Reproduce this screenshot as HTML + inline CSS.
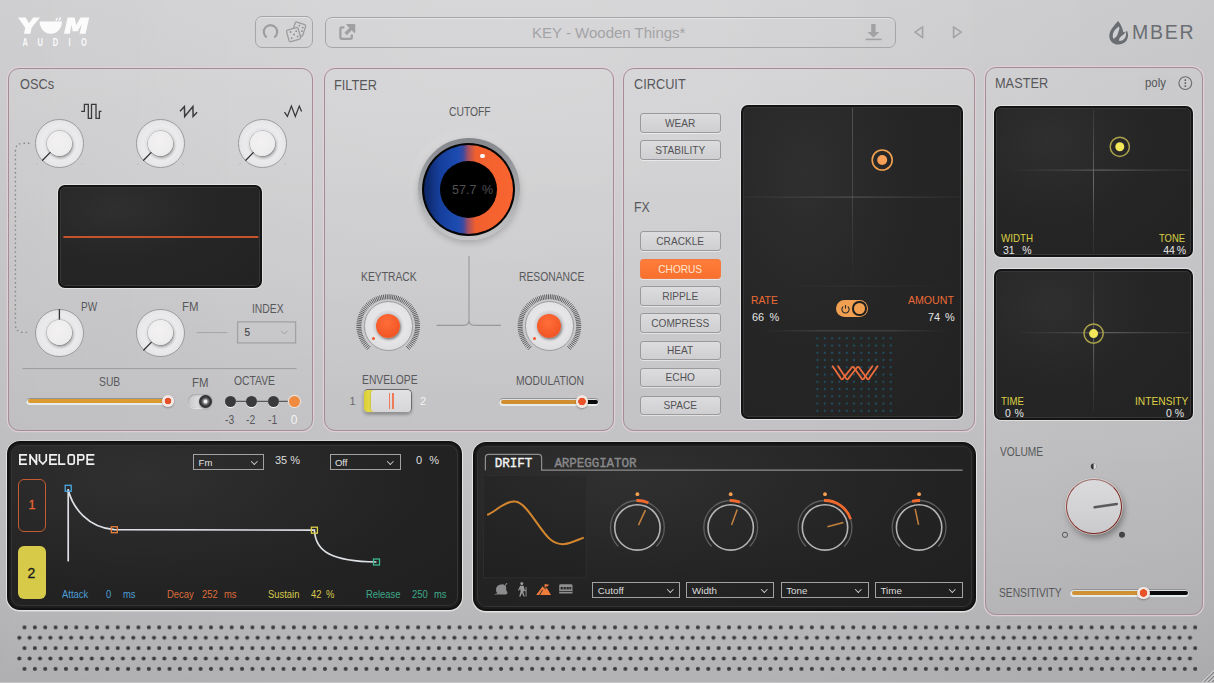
<!DOCTYPE html>
<html><head><meta charset="utf-8">
<style>
*{box-sizing:border-box;margin:0;padding:0}
html,body{width:1214px;height:683px;overflow:hidden}
body{position:relative;font-family:"Liberation Sans",sans-serif;background:radial-gradient(ellipse 620px 380px at 42% 4%,rgba(255,255,255,.12),rgba(255,255,255,0)),linear-gradient(90deg,rgba(0,0,0,.02) 0%,rgba(0,0,0,0) 30%,rgba(0,0,0,0) 60%,rgba(0,0,0,.045) 100%),linear-gradient(180deg,#d2d2d4 0%,#cfcfd1 12%,#c8c8ca 45%,#c3c3c5 64%,#bababc 88%,#b2b2b4 100%)}
.a{position:absolute}
.t{position:absolute;line-height:1;white-space:nowrap}
.panel{position:absolute;border:1px solid #a48e94;border-radius:11px;background:linear-gradient(180deg,rgba(255,255,255,.08),rgba(255,255,255,0));box-shadow:0 0 0 1.2px rgba(226,208,218,.85)}
.lbl{color:#58585b;transform-origin:0 0}
.h{transform:scaleX(.85)}
.s9{transform:scaleX(.86)}
.dark{position:absolute;background:radial-gradient(ellipse at 28% 22%,#2f2f2f 0%,#262626 45%,#222 100%);border:2px solid #141414;border-radius:7px;box-shadow:0 0 0 1px rgba(236,236,236,.65),inset 0 0 0 1px #363636}
.darkp{position:absolute;background:radial-gradient(ellipse at 30% 20%,#303030 0%,#232323 60%,#1f1f1f 100%);border-radius:13px;border:2px solid #121212;box-shadow:0 0.5px 0 1px rgba(240,240,240,.75),inset 0 0 0 2px #1c1c1c,inset 0 0 0 3px #343434}
.knob{position:absolute;border-radius:50%;border:1px solid #9c9c9e;background:radial-gradient(circle at 50% 50%,#d2d2d4 0%,#dcdcde 30%,#ebebed 52%,#e2e2e4 80%,#d8d8da 100%)}
.cap{position:absolute;border-radius:50%;background:radial-gradient(circle at 45% 40%,#f3f1f2 0%,#eeedee 60%,#e4e3e4 100%);box-shadow:1px 2px 3px rgba(0,0,0,.3),0 0 0 0.7px rgba(0,0,0,.18)}
.btn{position:absolute;left:640.3px;width:80.4px;height:19.6px;border:1px solid #9a9a9c;border-radius:3px;background:linear-gradient(180deg,#dcdcde,#cfcfd1);box-shadow:0 1px 0 rgba(255,255,255,.5)}
.btn span{position:absolute;left:0;right:0;top:3.6px;text-align:center;font-size:11px;line-height:1;color:#535355;transform:scaleX(.92)}
.btn.on{background:linear-gradient(180deg,#ff7d3a,#f8702e);border-color:#f27a40}
.btn.on span{color:#fde6d0}
.dd{position:absolute;border:1.2px solid #a2a2a4}
.dd span{position:absolute;left:4.4px;top:3.2px;font-size:9.5px;line-height:1;color:#e6e6e6}
.dd:after{content:"";position:absolute;right:7px;top:4px;width:3.6px;height:3.6px;border-right:1.1px solid #cfcfcf;border-bottom:1.1px solid #cfcfcf;transform:rotate(45deg)}
.dd2 span{font-size:9.8px;left:4.6px;top:3px;color:#dcdcdc}
</style></head><body>

<!-- header -->
<div class="a" style="left:255px;top:16px;width:58px;height:32px;border:1.3px solid #a6a6a8;border-radius:7px;box-shadow:inset 0 1px 0 rgba(255,255,255,.35)"></div>
<div class="a" style="left:325px;top:17px;width:571px;height:31px;border:1.3px solid #a6a6a8;border-radius:7px;box-shadow:inset 0 1px 0 rgba(255,255,255,.35)"></div>
<div class="t" style="left:532px;top:25px;font-size:15px;color:#a3a3a5">KEY - Wooden Things*</div>
<div class="t" style="left:1132px;top:23.2px;font-size:19.5px;color:#6a6e73;letter-spacing:1.75px">MBER</div>
<svg class="a" style="left:0;top:0" width="1214" height="60" viewBox="0 0 1214 60">
 <!-- YUM logo -->
 <g fill="#fbfbfb">
  <path d="M18,17.6 L25.6,17.6 L29,23.2 L33.2,17.6 L40,17.6 L31.6,27.8 L30.4,33.7 L24,33.7 L25.2,27.8 Z"/>
  <path d="M39.6,21.6 L62,21.6 A11.2,12.1 0 0 1 39.6,21.6 Z"/>
  <path d="M55.2,20.8 L57,17.4 L58.2,17.8 L56.8,20.8 Z M58.4,20.8 L60,17.2 L61.2,17.6 L60,20.8 Z"/>
  <path d="M64,33.7 L67.6,17.6 L74.6,17.6 L76.2,25 L80.6,17.6 L89.2,17.6 L85.6,33.7 L79.6,33.7 L81.6,24.6 L77.6,31.2 L72.6,31.2 L71.6,24.6 L69.8,33.7 Z"/>
 </g>
 <g fill="#fafafa" font-family="Liberation Sans" font-size="12" font-weight="bold">
  <text x="0" y="0" transform="translate(22.4,46.3) scale(0.62,0.98)">A</text>
  <text x="0" y="0" transform="translate(37.6,46.3) scale(0.62,0.98)">U</text>
  <text x="0" y="0" transform="translate(52.8,46.3) scale(0.62,0.98)">D</text>
  <text x="0" y="0" transform="translate(68.4,46.3) scale(0.62,0.98)">I</text>
  <text x="0" y="0" transform="translate(81,46.3) scale(0.62,0.98)">O</text>
 </g>
 <!-- refresh arc -->
 <path d="M266.7,37.3 A6.7,6.7 0 1 1 274.3,37.3" fill="none" stroke="#9c9c9e" stroke-width="2.1"/>
 <!-- dice -->
 <g fill="none" stroke="#9c9c9e" stroke-width="1.3" stroke-linejoin="round">
  <rect x="293.5" y="23" width="11" height="12" rx="1.5" transform="rotate(18 299 29)"/>
  <rect x="287.6" y="28.6" width="12" height="12" rx="1.5" transform="rotate(-16 293.6 34.6)" fill="#d4d4d6"/>
 </g>
 <g fill="#8e8e90">
  <circle cx="299.4" cy="25.6" r="0.9"/><circle cx="302.8" cy="27.6" r="0.9"/><circle cx="302" cy="31.2" r="0.9"/>
  <circle cx="290.6" cy="32" r="0.9"/><circle cx="294" cy="34.5" r="0.9"/><circle cx="297.6" cy="36.6" r="0.9"/><circle cx="291.6" cy="38.2" r="0.9"/><circle cx="296.2" cy="31.2" r="0.9"/>
 </g>
 <!-- share icon -->
 <path d="M344.4,27.4 L342,27.4 Q340.4,27.4 340.4,29 L340.4,37.2 Q340.4,38.8 342,38.8 L350.2,38.8 Q351.8,38.8 351.8,37.2 L351.8,34.6" fill="none" stroke="#a0a0a2" stroke-width="2.3"/>
 <path d="M345.6,34 L351.6,28" stroke="#a0a0a2" stroke-width="3.2"/>
 <path d="M347,24.6 L354.6,24.6 L354.6,32.2 Z" fill="#a0a0a2" stroke="#a0a0a2" stroke-width="1.4" stroke-linejoin="round"/>
 <!-- download icon -->
 <path d="M871.2,24 L875.6,24 L875.6,32 L879.4,32 L873.4,37.4 L867.4,32 L871.2,32 Z" fill="#a2a2a4"/>
 <rect x="865.6" y="38.6" width="16" height="1.6" fill="#a2a2a4"/>
 <!-- arrows -->
 <path d="M922.6,26.8 L915,32.2 L922.6,37.6 Z" fill="none" stroke="#a4a4a6" stroke-width="1.6" stroke-linejoin="round"/>
 <path d="M953.6,26.8 L961.2,32.2 L953.6,37.6 Z" fill="none" stroke="#a4a4a6" stroke-width="1.6" stroke-linejoin="round"/>
 <!-- ember flame -->
 <path d="M1118.1,21.1 C1114,26 1109.3,30.5 1109.3,36 C1109.3,41 1113.4,44.6 1118.5,44.6 C1123.8,44.6 1128,40.8 1128,35.6 C1128,33.6 1127.6,32 1126.9,30.7 C1125.8,32.2 1124.4,32.6 1123.2,31.8 C1122.4,27.8 1120.6,24 1118.1,21.1 Z" fill="#6a6e73"/>
 <path d="M1119,26.6 C1114.2,29.4 1111.8,34 1113.2,38.8 C1116.8,37.6 1117.6,34.6 1118.2,32.6 C1118.8,30.6 1120,28.8 1119,26.6 Z" fill="#d0d0d2"/>
 <path d="M1125.8,31.8 C1124.6,34.8 1121.4,35.4 1119.8,37.8 C1119,39 1119,40.2 1119.4,41 C1124,41 1127,36.8 1125.8,31.8 Z" fill="#d0d0d2"/>
</svg>

<!-- panels -->
<div class="panel" style="left:8px;top:68px;width:305px;height:363px"></div>
<div class="panel" style="left:324px;top:68px;width:290px;height:363px"></div>
<div class="panel" style="left:623px;top:68px;width:352px;height:363px"></div>
<div class="panel" style="left:985px;top:67px;width:218px;height:548px"></div>

<div class="t lbl h" style="left:20px;top:76px;font-size:15px">OSCs</div>
<div class="t lbl h" style="left:334px;top:76.6px;font-size:15px">FILTER</div>
<div class="t lbl h" style="left:634.2px;top:76px;font-size:15px">CIRCUIT</div>
<div class="t lbl h" style="left:995.2px;top:75.2px;font-size:15px">MASTER</div>


<!-- dark screens -->
<div class="dark" style="left:58px;top:185px;width:204px;height:103px"></div>
<div class="dark" style="left:741px;top:105px;width:222px;height:314px"></div>
<div class="dark" style="left:994px;top:106px;width:199px;height:151px"></div>
<div class="dark" style="left:994px;top:269px;width:199px;height:151px"></div>

<div class="darkp" style="left:7px;top:441px;width:455px;height:169px"></div>
<div class="darkp" style="left:473px;top:442px;width:503px;height:169px"></div>


<!-- OSCs content -->
<div class="knob" style="left:35px;top:119px;width:48.5px;height:48.5px"></div>
<div class="cap" style="left:47px;top:130.5px;width:25px;height:25px"></div>
<div class="knob" style="left:136px;top:119px;width:48.5px;height:48.5px"></div>
<div class="cap" style="left:148px;top:130.5px;width:25px;height:25px"></div>
<div class="knob" style="left:238.2px;top:119px;width:48.5px;height:48.5px"></div>
<div class="cap" style="left:250.2px;top:130.5px;width:25px;height:25px"></div>
<div class="knob" style="left:35px;top:308.6px;width:48.5px;height:48.5px"></div>
<div class="cap" style="left:47px;top:320.2px;width:25px;height:25px"></div>
<div class="knob" style="left:136.2px;top:308.6px;width:48.5px;height:48.5px"></div>
<div class="cap" style="left:148.2px;top:320.2px;width:25px;height:25px"></div>
<svg class="a" style="left:0;top:0" width="320" height="440" viewBox="0 0 320 440">
 <g stroke="#343436" stroke-width="1.35" stroke-linecap="round">
  <line x1="50" y1="152.6" x2="42.6" y2="160.2"/>
  <line x1="151" y1="152.6" x2="143.6" y2="160.2"/>
  <line x1="253.2" y1="152.6" x2="245.8" y2="160.2"/>
  <line x1="59.4" y1="309.6" x2="59.4" y2="319"/>
  <line x1="151.2" y1="342.4" x2="143.8" y2="350"/>
 </g>
 <g stroke="#bdbdbf" stroke-width="1" >
  <line x1="38" y1="163" x2="36" y2="165"/><line x1="81" y1="163" x2="83" y2="165"/>
  <line x1="139" y1="163" x2="137" y2="165"/><line x1="182" y1="163" x2="184" y2="165"/>
  <line x1="241" y1="163" x2="239" y2="165"/><line x1="284" y1="163" x2="286" y2="165"/>
  <line x1="38" y1="353" x2="36" y2="355"/><line x1="81" y1="353" x2="83" y2="355"/>
  <line x1="139" y1="353" x2="137" y2="355"/><line x1="182" y1="353" x2="184" y2="355"/>
 </g>
 <!-- wave icons -->
 <path d="M81.1,111.4 L84.4,111.4 L84.4,104.3 L88.3,104.3 L88.3,118.4 L91.5,118.4 L91.5,104.3 L96,104.3 L96,118.4 L99.4,118.4 L99.4,111.4 L101.5,111.4" fill="none" stroke="#3a3a3c" stroke-width="1.3" stroke-linejoin="miter"/>
 <path d="M180,111.2 L184.4,106.6 L184.7,116.4 L192.9,106.6 L193.1,116.4 L197.1,112.3" fill="none" stroke="#3a3a3c" stroke-width="1.5" stroke-linejoin="miter"/>
 <path d="M284.5,112.1 L287.4,116.4 L291.4,106.1 L295.3,116.4 L299.3,106.1 L301.6,111.4" fill="none" stroke="#3a3a3c" stroke-width="1.3" stroke-linejoin="miter"/>
 <!-- dotted connector -->
 <path d="M29.5,143.2 L23.4,143.2 Q15.4,143.2 15.4,151.2 L15.4,324.4 Q15.4,332.4 23.4,332.4 L30,332.4" fill="none" stroke="#8a8a8c" stroke-width="1.4" stroke-dasharray="1.6 2.8"/>
 <!-- screen line -->
 <line x1="63.4" y1="237" x2="258.4" y2="237" stroke="#c6532a" stroke-width="2"/>
 <!-- index connector -->
 <line x1="196.6" y1="332.6" x2="227.4" y2="332.6" stroke="#a6a6a8" stroke-width="1"/>
 <rect x="237.6" y="321.9" width="58" height="21" fill="none" stroke="#a2a2a4" stroke-width="1.3"/>
 <path d="M281.2,330.8 L284.4,334 L287.6,330.8" fill="none" stroke="#a0a0a2" stroke-width="1"/>
 <!-- separator -->
 <line x1="22.4" y1="368.6" x2="296.6" y2="368.6" stroke="#9c9c9e" stroke-width="1"/>
 <!-- octave -->
 <line x1="230.5" y1="401.4" x2="294.2" y2="401.4" stroke="#5a5a5c" stroke-width="1.3"/>
</svg>
<div class="t lbl s9" style="left:80.6px;top:301px;font-size:12px;transform:scaleX(.83)">PW</div>
<div class="t lbl s9" style="left:181.7px;top:301px;font-size:12px;transform:scaleX(.95)">FM</div>
<div class="t lbl s9" style="left:251.6px;top:303px;font-size:12px">INDEX</div>
<div class="t" style="left:244.6px;top:327.6px;font-size:10px;color:#48484a;-webkit-text-stroke:0.2px #48484a">5</div>
<div class="t lbl s9" style="left:99px;top:376px;font-size:12px">SUB</div>
<div class="t lbl s9" style="left:192.2px;top:376.6px;font-size:12px;transform:scaleX(.95)">FM</div>
<div class="t lbl s9" style="left:234.4px;top:375px;font-size:12px">OCTAVE</div>
<div class="t lbl s9" style="left:225px;top:414px;font-size:12px">-3</div>
<div class="t lbl s9" style="left:246.4px;top:414px;font-size:12px">-2</div>
<div class="t lbl s9" style="left:267.8px;top:414px;font-size:12px">-1</div>
<div class="t" style="left:290.8px;top:414px;font-size:12px;color:#f4f4f4">0</div>
<!-- sub slider -->
<div class="a" style="left:26px;top:397.6px;width:146px;height:7.6px;border-radius:4px;background:#e6eceb;box-shadow:inset 0 1px 1px #8a8a8a"></div>
<div class="a" style="left:27.6px;top:399.2px;width:140px;height:4px;border-radius:2px;background:#dc9a30"></div>
<div class="a" style="left:161.8px;top:394.8px;width:12.6px;height:12.6px;border-radius:50%;background:radial-gradient(circle,#e4502a 0 38%,#f3e7e4 42% 70%,#cfc8c6 100%);box-shadow:0 1px 2px rgba(0,0,0,.3)"></div>
<!-- fm toggle -->
<div class="a" style="left:188px;top:393.6px;width:24.6px;height:14.6px;border-radius:8px;background:linear-gradient(90deg,#c8c8ca,#dcdcde 40%,#d0d0d2);box-shadow:inset 0 1px 2px rgba(0,0,0,.25),0 1px 0 rgba(255,255,255,.5)"></div>
<div class="a" style="left:199.4px;top:394.6px;width:13px;height:13px;border-radius:50%;background:radial-gradient(circle at 50% 50%,#f2f2f2 0 14%,#8a8a8c 26%,#3a3a3c 48%,#262628 72%,#3c3c3e 100%);box-shadow:0 1px 2px rgba(0,0,0,.3)"></div>
<!-- octave dots -->
<div class="a" style="left:225px;top:395.8px;width:11px;height:11px;border-radius:50%;background:#3a3a3c;box-shadow:0 1.2px 0.5px rgba(245,245,245,.9)"></div>
<div class="a" style="left:246.2px;top:395.8px;width:11px;height:11px;border-radius:50%;background:#3a3a3c;box-shadow:0 1.2px 0.5px rgba(245,245,245,.9)"></div>
<div class="a" style="left:267.7px;top:395.8px;width:11px;height:11px;border-radius:50%;background:#3a3a3c;box-shadow:0 1.2px 0.5px rgba(245,245,245,.9)"></div>
<div class="a" style="left:288.7px;top:395.8px;width:11px;height:11px;border-radius:50%;background:#f08a40;box-shadow:0 0 0 1.2px #e8e0da,0 1px 1px rgba(0,0,0,.3)"></div>


<!-- FILTER content -->
<div class="t lbl s9" style="left:448.8px;top:106px;font-size:12px">CUTOFF</div>
<div class="t lbl s9" style="left:361.2px;top:271px;font-size:12px">KEYTRACK</div>
<div class="t lbl s9" style="left:518.6px;top:271px;font-size:12px">RESONANCE</div>
<div class="t lbl s9" style="left:361.7px;top:374px;font-size:12px">ENVELOPE</div>
<div class="t lbl s9" style="left:516.2px;top:374.5px;font-size:12px">MODULATION</div>
<div class="t" style="left:349.4px;top:396px;font-size:11px;color:#6a6a6c">1</div>
<div class="t" style="left:420px;top:396px;font-size:11px;color:#f2f2f2">2</div>
<!-- cutoff big knob -->
<div class="a" style="left:408px;top:128px;width:122px;height:122px;border-radius:50%;background:radial-gradient(circle at 45% 40%,rgba(255,255,255,.18) 0%,rgba(255,255,255,0) 62%)"></div>
<div class="a" style="left:417.8px;top:138.4px;width:101.8px;height:101.8px;border-radius:50%;background:linear-gradient(180deg,#84878c 0%,#a4a6a9 50%,#c6c6c8 100%);box-shadow:0 3px 6px rgba(0,0,0,.18)"></div>
<div class="a" style="left:422.3px;top:142.9px;width:92.8px;height:92.8px;border-radius:50%;background:#050505"></div>
<div class="a" style="left:424.2px;top:144.8px;width:89px;height:89px;border-radius:50%;background:linear-gradient(90deg,#0c2462 0%,#163f9c 18%,#1c4cb2 38%,#3c4aa0 44%,#a85060 50%,#f0602e 58%,#fa6530 100%)"></div>
<div class="a" style="left:440.3px;top:161.2px;width:56.8px;height:56.8px;border-radius:50%;background:#000"></div>
<div class="a" style="left:480.4px;top:153.7px;width:4.6px;height:4.6px;border-radius:50%;background:#f8f8f8"></div>
<div class="t" style="left:452px;top:183.8px;font-size:12.5px;color:#505052;word-spacing:2.2px">57.7 %</div>
<!-- keytrack/resonance knobs -->
<svg class="a" style="left:0;top:0" width="620" height="440" viewBox="0 0 620 440">
 <path d="M370.27,346.02L366.92,349.73M369.09,344.89L365.52,348.39M367.98,343.69L364.20,346.97M366.94,342.42L362.98,345.47M365.99,341.10L361.84,343.89M365.12,339.71L360.81,342.25M364.33,338.28L359.88,340.56M363.63,336.81L359.05,338.80M363.02,335.29L358.33,337.00M362.51,333.74L357.72,335.16M362.09,332.16L357.22,333.29M361.77,330.56L356.84,331.39M361.55,328.94L356.58,329.47M361.43,327.31L356.43,327.53M361.40,325.67L356.40,325.59M361.48,324.04L356.49,323.66M361.65,322.42L356.70,321.73M361.93,320.81L357.03,319.82M362.30,319.22L357.47,317.93M362.77,317.65L358.02,316.07M363.33,316.12L358.69,314.25M363.98,314.62L359.47,312.48M364.73,313.16L360.35,310.75M365.56,311.76L361.34,309.08M366.48,310.40L362.42,307.48M367.47,309.11L363.61,305.94M368.55,307.88L364.88,304.48M369.69,306.72L366.24,303.10M370.91,305.62L367.68,301.80M372.19,304.61L369.20,300.60M373.53,303.67L370.79,299.49M374.92,302.82L372.45,298.48M376.37,302.05L374.16,297.57M377.85,301.38L375.92,296.77M379.38,300.79L377.73,296.07M380.94,300.30L379.58,295.49M382.52,299.91L381.46,295.02M384.13,299.61L383.37,294.67M385.75,299.41L385.30,294.43M387.38,299.31L387.23,294.31M389.02,299.31L389.17,294.31M390.65,299.41L391.10,294.43M392.27,299.61L393.03,294.67M393.88,299.91L394.94,295.02M395.46,300.30L396.82,295.49M397.02,300.79L398.67,296.07M398.55,301.38L400.48,296.77M400.03,302.05L402.24,297.57M401.48,302.82L403.95,298.48M402.87,303.67L405.61,299.49M404.21,304.61L407.20,300.60M405.49,305.62L408.72,301.80M406.71,306.72L410.16,303.10M407.85,307.88L411.52,304.48M408.93,309.11L412.79,305.94M409.92,310.40L413.98,307.48M410.84,311.76L415.06,309.08M411.67,313.16L416.05,310.75M412.42,314.62L416.93,312.48M413.07,316.12L417.71,314.25M413.63,317.65L418.38,316.07M414.10,319.22L418.93,317.93M414.47,320.81L419.37,319.82M414.75,322.42L419.70,321.73M414.92,324.04L419.91,323.66M415.00,325.67L420.00,325.59M414.97,327.31L419.97,327.53M414.85,328.94L419.82,329.47M414.63,330.56L419.56,331.39M414.31,332.16L419.18,333.29M413.89,333.74L418.68,335.16M413.38,335.29L418.07,337.00M412.77,336.81L417.35,338.80M412.07,338.28L416.52,340.56M411.28,339.71L415.59,342.25M410.41,341.10L414.56,343.89M409.46,342.42L413.42,345.47M408.42,343.69L412.20,346.97M407.31,344.89L410.88,348.39M406.13,346.02L409.48,349.73M531.47,346.02L528.12,349.73M530.29,344.89L526.72,348.39M529.18,343.69L525.40,346.97M528.14,342.42L524.18,345.47M527.19,341.10L523.04,343.89M526.32,339.71L522.01,342.25M525.53,338.28L521.08,340.56M524.83,336.81L520.25,338.80M524.22,335.29L519.53,337.00M523.71,333.74L518.92,335.16M523.29,332.16L518.42,333.29M522.97,330.56L518.04,331.39M522.75,328.94L517.78,329.47M522.63,327.31L517.63,327.53M522.60,325.67L517.60,325.59M522.68,324.04L517.69,323.66M522.85,322.42L517.90,321.73M523.13,320.81L518.23,319.82M523.50,319.22L518.67,317.93M523.97,317.65L519.22,316.07M524.53,316.12L519.89,314.25M525.18,314.62L520.67,312.48M525.93,313.16L521.55,310.75M526.76,311.76L522.54,309.08M527.68,310.40L523.62,307.48M528.67,309.11L524.81,305.94M529.75,307.88L526.08,304.48M530.89,306.72L527.44,303.10M532.11,305.62L528.88,301.80M533.39,304.61L530.40,300.60M534.73,303.67L531.99,299.49M536.12,302.82L533.65,298.48M537.57,302.05L535.36,297.57M539.05,301.38L537.12,296.77M540.58,300.79L538.93,296.07M542.14,300.30L540.78,295.49M543.72,299.91L542.66,295.02M545.33,299.61L544.57,294.67M546.95,299.41L546.50,294.43M548.58,299.31L548.43,294.31M550.22,299.31L550.37,294.31M551.85,299.41L552.30,294.43M553.47,299.61L554.23,294.67M555.08,299.91L556.14,295.02M556.66,300.30L558.02,295.49M558.22,300.79L559.87,296.07M559.75,301.38L561.68,296.77M561.23,302.05L563.44,297.57M562.68,302.82L565.15,298.48M564.07,303.67L566.81,299.49M565.41,304.61L568.40,300.60M566.69,305.62L569.92,301.80M567.91,306.72L571.36,303.10M569.05,307.88L572.72,304.48M570.13,309.11L573.99,305.94M571.12,310.40L575.18,307.48M572.04,311.76L576.26,309.08M572.87,313.16L577.25,310.75M573.62,314.62L578.13,312.48M574.27,316.12L578.91,314.25M574.83,317.65L579.58,316.07M575.30,319.22L580.13,317.93M575.67,320.81L580.57,319.82M575.95,322.42L580.90,321.73M576.12,324.04L581.11,323.66M576.20,325.67L581.20,325.59M576.17,327.31L581.17,327.53M576.05,328.94L581.02,329.47M575.83,330.56L580.76,331.39M575.51,332.16L580.38,333.29M575.09,333.74L579.88,335.16M574.58,335.29L579.27,337.00M573.97,336.81L578.55,338.80M573.27,338.28L577.72,340.56M572.48,339.71L576.79,342.25M571.61,341.10L575.76,343.89M570.66,342.42L574.62,345.47M569.62,343.69L573.40,346.97M568.51,344.89L572.08,348.39M567.33,346.02L570.68,349.73" stroke="#4c4c4e" stroke-width="0.85" fill="none"/>
 <path d="M469,256 L469,320 Q469,325.4 463.6,325.4 L436.6,325.4 M469,320 Q469,325.4 474.4,325.4 L501,325.4" fill="none" stroke="#98989a" stroke-width="1.1"/>
</svg>
<div class="knob" style="left:363.5px;top:301.3px;width:49.4px;height:49.4px;background:radial-gradient(circle at 50% 45%,#ececee 0%,#e4e4e6 55%,#d6d6d8 100%)"></div>
<div class="a" style="left:372px;top:310px;width:32.4px;height:32.4px;border-radius:50%;background:radial-gradient(circle at 50% 50%,#cfcfd1 0 55%,#e8e8ea 75%,#e4e4e6 100%)"></div>
<div class="a" style="left:376.1px;top:314px;width:24.2px;height:24.2px;border-radius:50%;background:radial-gradient(circle at 45% 35%,#ff6e3a 0%,#f45a28 60%,#e04e22 100%);box-shadow:1px 1.5px 2px rgba(0,0,0,.35)"></div>
<div class="a" style="left:372px;top:336.7px;width:3.2px;height:3.2px;border-radius:50%;background:#f05a28"></div>
<div class="knob" style="left:524.7px;top:301.3px;width:49.4px;height:49.4px;background:radial-gradient(circle at 50% 45%,#ececee 0%,#e4e4e6 55%,#d6d6d8 100%)"></div>
<div class="a" style="left:533.2px;top:310px;width:32.4px;height:32.4px;border-radius:50%;background:radial-gradient(circle at 50% 50%,#cfcfd1 0 55%,#e8e8ea 75%,#e4e4e6 100%)"></div>
<div class="a" style="left:537.3px;top:314px;width:24.2px;height:24.2px;border-radius:50%;background:radial-gradient(circle at 45% 35%,#ff6e3a 0%,#f45a28 60%,#e04e22 100%);box-shadow:1px 1.5px 2px rgba(0,0,0,.35)"></div>
<div class="a" style="left:533.2px;top:336.7px;width:3.2px;height:3.2px;border-radius:50%;background:#f05a28"></div>
<!-- envelope toggle -->
<div class="a" style="left:362.8px;top:389.3px;width:49.4px;height:23.4px;border-radius:5px;background:#c8c8ca;border:1px solid #6e6e70;border-left-color:#b0b0b2;border-bottom-color:#9a9a9c;box-shadow:0 2px 3px rgba(0,0,0,.25)"></div>
<div class="a" style="left:363.6px;top:390.4px;width:12px;height:21.4px;border-radius:4px 0 0 4px;background:linear-gradient(90deg,#d8cc30,#ece050 60%,#e0d440)"></div>
<div class="a" style="left:371.3px;top:390.2px;width:40px;height:22px;border-radius:4px;background:linear-gradient(180deg,#e2e2e4,#d6d6d8);box-shadow:-1px 0 2px rgba(0,0,0,.15)"></div>
<div class="a" style="left:389.2px;top:393.4px;width:1.2px;height:15.2px;background:#ee7a5a"></div>
<div class="a" style="left:392.4px;top:393.4px;width:1.2px;height:15.2px;background:#ee7a5a"></div>
<!-- modulation slider -->
<div class="a" style="left:499px;top:398.4px;width:100.4px;height:7.6px;border-radius:4px;background:#e6eceb;box-shadow:inset 0 1px 1px #8a8a8a"></div>
<div class="a" style="left:500.6px;top:400px;width:82px;height:4px;border-radius:2px;background:#d08e30"></div>
<div class="a" style="left:582px;top:400px;width:15.6px;height:4px;border-radius:0 2px 2px 0;background:#0a0a0a"></div>
<div class="a" style="left:575.6px;top:395.2px;width:12.6px;height:12.6px;border-radius:50%;background:radial-gradient(circle,#e8532a 0 40%,#f2e6e2 46% 72%,#c9c2c0 100%);box-shadow:0 1px 2px rgba(0,0,0,.3)"></div>


<!-- CIRCUIT content -->
<div class="btn" style="top:113px"><span>WEAR</span></div>
<div class="btn" style="top:140.4px"><span>STABILITY</span></div>
<div class="t lbl h" style="left:634.4px;top:199.6px;font-size:14.5px">FX</div>
<div class="btn" style="top:231.4px"><span>CRACKLE</span></div>
<div class="btn on" style="top:259.2px"><span>CHORUS</span></div>
<div class="btn" style="top:286px"><span>RIPPLE</span></div>
<div class="btn" style="top:313.4px"><span>COMPRESS</span></div>
<div class="btn" style="top:340.8px"><span>HEAT</span></div>
<div class="btn" style="top:367.8px"><span>ECHO</span></div>
<div class="btn" style="top:395.6px"><span>SPACE</span></div>
<svg class="a" style="left:0;top:0" width="980" height="440" viewBox="0 0 980 440">
 <defs>
  <linearGradient id="vl" x1="0" y1="0" x2="0" y2="1"><stop offset="0" stop-color="#555" stop-opacity=".9"/><stop offset=".55" stop-color="#4a4a4a" stop-opacity=".8"/><stop offset="1" stop-color="#3a3a3a" stop-opacity="0"/></linearGradient>
  <linearGradient id="hl" x1="0" y1="0" x2="1" y2="0"><stop offset="0" stop-color="#444" stop-opacity=".3"/><stop offset=".5" stop-color="#5a5a5a"/><stop offset="1" stop-color="#444" stop-opacity=".3"/></linearGradient>
  <linearGradient id="hl3" x1="0" y1="0" x2="1" y2="0"><stop offset="0" stop-color="#2a2a2a" stop-opacity="0"/><stop offset=".5" stop-color="#343434"/><stop offset="1" stop-color="#2a2a2a" stop-opacity=".2"/></linearGradient>
  <linearGradient id="hl4" x1="0" y1="0" x2="1" y2="0"><stop offset="0" stop-color="#3a3a3a" stop-opacity="0"/><stop offset=".3" stop-color="#444"/><stop offset=".7" stop-color="#444"/><stop offset="1" stop-color="#3a3a3a" stop-opacity="0"/></linearGradient>
  <pattern id="dg" x="815.6" y="336.5" width="7.33" height="7.25" patternUnits="userSpaceOnUse"><circle cx="1.8" cy="1.8" r="1.05" fill="#1d5268"/></pattern>
 </defs>
 <rect x="852" y="108" width="1" height="180" fill="url(#vl)"/>
 <rect x="744" y="196.6" width="216" height="1" fill="url(#hl)"/>
 <circle cx="882.2" cy="160" r="10" fill="none" stroke="#f0a050" stroke-width="1.6"/>
 <circle cx="882.2" cy="160" r="5" fill="#f8a058"/>
 <rect x="743" y="285.6" width="218" height="1" fill="url(#hl3)"/>
 <rect x="760" y="330.2" width="190" height="1.2" fill="url(#hl4)"/>
 <rect x="815.6" y="336.5" width="77" height="77" fill="url(#dg)"/>
 <g fill="none" stroke="#ec6c3c" stroke-width="1.8" stroke-linecap="round">
  <path d="M832.7,366.2 L840.2,377.5 Q841.8,381.2 843.8,377.5 L850.8,368.7 Q852.8,365.0 854.6,368.7 L861.0,377.5 Q862.8,381.2 864.5,377.5 L872.3,366.2"/>
  <path d="M838.0,366.2 L845.5,377.5 Q847.1,381.2 849.1,377.5 L856.1,368.7 Q858.1,365.0 859.9,368.7 L866.3,377.5 Q868.1,381.2 869.8,377.5 L877.6,366.2"/>
 </g>
</svg>
<div class="t" style="left:751px;top:295px;font-size:11.5px;color:#ec6a35;transform:scaleX(.9);transform-origin:0 0">RATE</div>
<div class="t" style="left:752px;top:311.7px;font-size:11.5px;color:#e4e4e4;word-spacing:2.5px;transform:scaleX(.95);transform-origin:0 0">66 %</div>
<div class="t" style="left:908px;top:295px;font-size:11.5px;color:#ec6a35;transform:scaleX(.92);transform-origin:0 0">AMOUNT</div>
<div class="t" style="left:927.6px;top:311.7px;font-size:11.5px;color:#e4e4e4;word-spacing:2px;transform:scaleX(.95);transform-origin:0 0">74 %</div>
<div class="a" style="left:836px;top:299.8px;width:32.2px;height:17px;border-radius:9px;background:#f0a050"></div>
<div class="a" style="left:852.4px;top:301.2px;width:14.4px;height:14.4px;border-radius:50%;border:2px solid #1e1e1e;background:#f0a050"></div>
<svg class="a" style="left:840px;top:303px" width="11" height="11" viewBox="0 0 11 11"><path d="M3.2,3.6 A3.6,3.6 0 1 0 7.8,3.6" fill="none" stroke="#2a2a2a" stroke-width="1.1"/><line x1="5.5" y1="2" x2="5.5" y2="5.6" stroke="#2a2a2a" stroke-width="1.1"/></svg>


<!-- MASTER content -->
<div class="a" style="left:1140px;top:75px;width:35px;height:17px;border-radius:4px;background:rgba(200,200,202,.35)"></div>
<div class="t" style="left:1145.4px;top:77.4px;font-size:12px;color:#555557;transform:scaleX(.95);transform-origin:0 0">poly</div>
<svg class="a" style="left:0;top:0" width="1214" height="683" viewBox="0 0 1214 683">
 <defs>
  <linearGradient id="vl2" x1="0" y1="0" x2="0" y2="1"><stop offset="0" stop-color="#505050" stop-opacity=".4"/><stop offset=".5" stop-color="#6a6a6a"/><stop offset="1" stop-color="#404040" stop-opacity=".3"/></linearGradient>
  <linearGradient id="hl2" x1="0" y1="0" x2="1" y2="0"><stop offset="0" stop-color="#444" stop-opacity=".2"/><stop offset=".5" stop-color="#6e6e6e"/><stop offset="1" stop-color="#444" stop-opacity=".4"/></linearGradient>
 </defs>
 <circle cx="1185.3" cy="83.1" r="6.4" fill="none" stroke="#6a6a6c" stroke-width="1.1"/>
 <circle cx="1185.3" cy="80.1" r="0.9" fill="#555"/><circle cx="1185.3" cy="83.1" r="0.9" fill="#555"/><circle cx="1185.3" cy="86.1" r="0.9" fill="#555"/>
 <rect x="1093" y="110" width="1" height="144" fill="url(#vl2)"/>
 <rect x="1015" y="169.6" width="176" height="1" fill="url(#hl2)"/>
 <circle cx="1119.8" cy="146.8" r="9.6" fill="none" stroke="#aaa24a" stroke-width="1.5"/>
 <circle cx="1119.8" cy="146.8" r="4.5" fill="#f2e85a"/>
 <rect x="1093.1" y="272" width="1" height="140" fill="url(#vl2)"/>
 <rect x="1020" y="332.2" width="170" height="1" fill="url(#hl2)"/>
 <circle cx="1093.6" cy="333.6" r="9.6" fill="none" stroke="#aaa24a" stroke-width="1.5"/>
 <circle cx="1093.6" cy="333.6" r="4.5" fill="#f2e85a"/>
 <!-- volume markers -->
 <circle cx="1093.6" cy="466.4" r="2.8" fill="#3a3a3c"/>
 <path d="M1093.6,463.6 A2.8,2.8 0 0 1 1093.6,469.2 Z" fill="#d8d8da"/>
 <circle cx="1065" cy="534.8" r="2.6" fill="none" stroke="#555" stroke-width="1"/>
 <circle cx="1122" cy="534.8" r="3" fill="#444446"/>
</svg>
<div class="t" style="left:1001px;top:233.2px;font-size:11px;color:#dccf45;transform:scaleX(.89);transform-origin:0 0">WIDTH</div>
<div class="t" style="left:1003px;top:245.4px;font-size:10.5px;color:#e6e6e6;word-spacing:4.6px">31 %</div>
<div class="t" style="left:1159px;top:233.2px;font-size:11px;color:#dccf45;transform:scaleX(.86);transform-origin:0 0">TONE</div>
<div class="t" style="left:1163.2px;top:245.4px;font-size:10.5px;color:#e6e6e6;word-spacing:-1px">44 %</div>
<div class="t" style="left:1001px;top:395.6px;font-size:11px;color:#dccf45;transform:scaleX(.87);transform-origin:0 0">TIME</div>
<div class="t" style="left:1005px;top:407.8px;font-size:10.5px;color:#e6e6e6;word-spacing:0.7px">0 %</div>
<div class="t" style="left:1134.6px;top:395.6px;font-size:11px;color:#dccf45;transform:scaleX(.93);transform-origin:0 0">INTENSITY</div>
<div class="t" style="left:1166px;top:407.8px;font-size:10.5px;color:#e6e6e6;word-spacing:0px">0 %</div>
<div class="t lbl s9" style="left:1000px;top:445.6px;font-size:12px;transform:scaleX(.85)">VOLUME</div>
<div class="t lbl s9" style="left:999px;top:587.4px;font-size:12px;transform:scaleX(.855)">SENSITIVITY</div>
<!-- volume knob -->
<div class="a" style="left:1066.2px;top:478.7px;width:55.4px;height:55.4px;border-radius:50%;background:linear-gradient(180deg,#dadadc 0%,#d2d2d4 60%,#cacacc 100%);border:1.8px solid #7a261c;border-top-color:#a07470;border-left-color:#8c4038;box-shadow:0 0 0 0.8px rgba(255,235,235,.6),2px 4px 6px rgba(0,0,0,.35)"></div>
<svg class="a" style="left:1060px;top:474px" width="70" height="70" viewBox="1060 474 70 70"><line x1="1094.6" y1="507.2" x2="1116.8" y2="504" stroke="#5a5a5c" stroke-width="2.6" stroke-linecap="round"/></svg>
<!-- sensitivity slider -->
<div class="a" style="left:1070.4px;top:589.4px;width:119px;height:7.6px;border-radius:4px;background:#e4eae9;box-shadow:inset 0 1px 1px #8a8a8a"></div>
<div class="a" style="left:1072px;top:591px;width:72px;height:4px;border-radius:2px;background:#d09034"></div>
<div class="a" style="left:1143px;top:591px;width:44.8px;height:4px;border-radius:0 2px 2px 0;background:#0a0a0a"></div>
<div class="a" style="left:1137.2px;top:586.6px;width:12.6px;height:12.6px;border-radius:50%;background:radial-gradient(circle,#e8532a 0 40%,#f2e6e2 46% 72%,#c9c2c0 100%);box-shadow:0 1px 2px rgba(0,0,0,.3)"></div>


<!-- ENVELOPE panel content -->
<svg class="a" style="left:19px;top:454.4px;overflow:visible" width="76" height="11" viewBox="0 0 76 10.8"><path d="M8.1,0.875 H0.875 V9.925 H8.1 M0.875,5.4 H7.199999999999999 M11.075,10.8 V0 M11.075,1.3 L17.425,9.5 M17.425,10.8 V0 M20.475,0 V6.4 L23.85,9.925 L27.225,6.4 V0 M38.2,0.875 H30.975 V9.925 H38.2 M30.975,5.4 H37.300000000000004 M40.075,0 V9.925 H46.300000000000004 M50.875,0.875 H53.625 Q55.225,0.875 55.225,2.475 V8.325000000000001 Q55.225,9.925 53.625,9.925 H50.875 Q49.275,9.925 49.275,8.325000000000001 V2.475 Q49.275,0.875 50.875,0.875 Z M58.975,10.8 V0.875 H63.224999999999994 Q64.725,0.875 64.725,2.375 V4.25 Q64.725,5.75 63.224999999999994,5.75 H58.975 M75.39999999999999,0.875 H68.175 V9.925 H75.39999999999999 M68.175,5.4 H74.49999999999999" fill="none" stroke="#f0f0f0" stroke-width="1.75" stroke-linejoin="miter"/></svg>
<div class="dd" style="left:193.2px;top:453.6px;width:71px;height:16.4px"><span>Fm</span></div>
<div class="dd" style="left:329.6px;top:453.6px;width:71px;height:16.4px"><span>Off</span></div>
<div class="t" style="left:275px;top:455px;font-size:11px;color:#dedede;word-spacing:0px">35 %</div>
<div class="t" style="left:416px;top:455px;font-size:11px;color:#dedede;word-spacing:4px">0 %</div>
<div class="a" style="left:18.4px;top:479.2px;width:27.8px;height:52.6px;border:1.6px solid #c65a32;border-radius:6px"></div>
<div class="t" style="left:28.6px;top:499px;font-size:12.5px;font-family:'Liberation Sans',sans-serif;color:#e8652f;-webkit-text-stroke:0.3px #e8652f">1</div>
<div class="a" style="left:18.4px;top:546px;width:27.8px;height:53px;border-radius:6px;background:#d6ca48"></div>
<div class="t" style="left:27.4px;top:565.6px;font-size:14px;font-family:'Liberation Sans',sans-serif;color:#1a1a1a;-webkit-text-stroke:0.3px #1a1a1a">2</div>
<svg class="a" style="left:0;top:440px" width="470" height="170" viewBox="0 440 470 170">
 <g fill="none" stroke="#dde0e4" stroke-width="1.7">
  <line x1="68.2" y1="489" x2="68.2" y2="561.4"/>
  <path d="M68.2,490 C73,508 88,528 114.3,529.6 L314.4,530.2 C315.6,552 332,561.4 376.5,562"/>
 </g>
 <g fill="none" stroke-width="1.3">
  <rect x="65.2" y="485.3" width="6" height="6" stroke="#4aa8e4"/>
  <rect x="111.3" y="526.7" width="6" height="6" stroke="#e8803c"/>
  <rect x="311.4" y="527.2" width="6" height="6" stroke="#dccf48"/>
  <rect x="373.5" y="559" width="6" height="6" stroke="#3cb88e"/>
 </g>
</svg>
<div class="t" style="left:62px;top:589px;font-size:10px;color:#4c9ed8;transform:scaleX(.94);transform-origin:0 0;margin-top:.8px">Attack</div>
<div class="t" style="left:106.4px;top:589px;font-size:10px;color:#4c9ed8;transform:scaleX(.94);transform-origin:0 0;margin-top:.8px">0</div>
<div class="t" style="left:122.8px;top:589px;font-size:10px;color:#4c9ed8;transform:scaleX(.94);transform-origin:0 0;margin-top:.8px">ms</div>
<div class="t" style="left:166.5px;top:589px;font-size:10px;color:#de6c3a;transform:scaleX(.94);transform-origin:0 0;margin-top:.8px">Decay</div>
<div class="t" style="left:202.4px;top:589px;font-size:10px;color:#de6c3a;transform:scaleX(.94);transform-origin:0 0;margin-top:.8px">252</div>
<div class="t" style="left:224.4px;top:589px;font-size:10px;color:#de6c3a;transform:scaleX(.94);transform-origin:0 0;margin-top:.8px">ms</div>
<div class="t" style="left:268.2px;top:589px;font-size:10px;color:#d6c84c;transform:scaleX(.94);transform-origin:0 0;margin-top:.8px">Sustain</div>
<div class="t" style="left:310.8px;top:589px;font-size:10px;color:#d6c84c;transform:scaleX(.94);transform-origin:0 0;margin-top:.8px">42</div>
<div class="t" style="left:326.2px;top:589px;font-size:10px;color:#d6c84c;transform:scaleX(.94);transform-origin:0 0;margin-top:.8px">%</div>
<div class="t" style="left:365.8px;top:589px;font-size:10px;color:#3eaa8a;transform:scaleX(.94);transform-origin:0 0;margin-top:.8px">Release</div>
<div class="t" style="left:412.2px;top:589px;font-size:10px;color:#3eaa8a;transform:scaleX(.94);transform-origin:0 0;margin-top:.8px">250</div>
<div class="t" style="left:434.2px;top:589px;font-size:10px;color:#3eaa8a;transform:scaleX(.94);transform-origin:0 0;margin-top:.8px">ms</div>

<!-- DRIFT panel content -->
<svg class="a" style="left:470px;top:440px" width="510" height="175" viewBox="470 440 510 175">
 <path d="M485.4,470.2 L485.4,457.4 Q485.4,454.4 488.4,454.4 L538.6,454.4 Q541.6,454.4 541.6,457.4 L541.6,470.2 L962.6,470.2" fill="none" stroke="#8e8e90" stroke-width="1.2"/>
 <rect x="483.6" y="475.4" width="102.6" height="102.4" fill="rgba(0,0,0,.08)" stroke="#2e2e2e" stroke-width="1"/>
 <path d="M487.2,515 C496,511 505,501 515,501.6 C527,502 540,532 551,540 C562,548 570,543 583.8,537.6" fill="none" stroke="#d4862e" stroke-width="2"/>
 <path d="M618.38,546.42 A26.9,26.9 0 1 1 656.42,546.42" fill="none" stroke="#5e5e60" stroke-width="1.3"/>
 <circle cx="637.40" cy="527.40" r="22.7" fill="none" stroke="#b4b4b6" stroke-width="1.6"/>
 <path d="M636.46,500.52 A26.9,26.9 0 0 1 648.34,502.83" fill="none" stroke="#f06a30" stroke-width="2.8"/>
 <line x1="638.46" y1="525.13" x2="645.43" y2="510.18" stroke="#c4823e" stroke-width="1.5"/>
 <circle cx="637.40" cy="494.20" r="1.9" fill="#f8a050"/>
 <path d="M711.68,546.42 A26.9,26.9 0 1 1 749.72,546.42" fill="none" stroke="#5e5e60" stroke-width="1.3"/>
 <circle cx="730.70" cy="527.40" r="22.7" fill="none" stroke="#b4b4b6" stroke-width="1.6"/>
 <path d="M729.76,500.52 A26.9,26.9 0 0 1 739.90,502.12" fill="none" stroke="#f06a30" stroke-width="2.8"/>
 <line x1="731.56" y1="525.05" x2="737.20" y2="509.55" stroke="#c4823e" stroke-width="1.5"/>
 <circle cx="730.70" cy="494.20" r="1.9" fill="#f8a050"/>
 <path d="M805.98,546.42 A26.9,26.9 0 1 1 844.02,546.42" fill="none" stroke="#5e5e60" stroke-width="1.3"/>
 <circle cx="825.00" cy="527.40" r="22.7" fill="none" stroke="#b4b4b6" stroke-width="1.6"/>
 <path d="M824.06,500.52 A26.9,26.9 0 0 1 850.58,519.09" fill="none" stroke="#f06a30" stroke-width="2.8"/>
 <line x1="827.41" y1="526.75" x2="843.35" y2="522.48" stroke="#c4823e" stroke-width="1.5"/>
 <circle cx="825.00" cy="494.20" r="1.9" fill="#f8a050"/>
 <path d="M900.08,546.42 A26.9,26.9 0 1 1 938.12,546.42" fill="none" stroke="#5e5e60" stroke-width="1.3"/>
 <circle cx="919.10" cy="527.40" r="22.7" fill="none" stroke="#b4b4b6" stroke-width="1.6"/>
 <path d="M912.14,501.42 A26.9,26.9 0 0 1 920.04,500.52" fill="none" stroke="#f06a30" stroke-width="2.8"/>
 <line x1="918.58" y1="524.95" x2="915.15" y2="508.82" stroke="#c4823e" stroke-width="1.5"/>
 <circle cx="919.10" cy="494.20" r="1.9" fill="#f8a050"/>
</svg>
<div class="t" style="left:494.8px;top:457.4px;font-size:12.6px;font-family:'Liberation Mono',monospace;color:#f4f4f4;letter-spacing:-0.1px;-webkit-text-stroke:0.35px #f4f4f4;margin-top:.6px">DRIFT</div>
<div class="t" style="left:554.4px;top:457.4px;font-size:12.6px;font-family:'Liberation Mono',monospace;color:#8a8a8c;letter-spacing:-0.1px;-webkit-text-stroke:0.35px #8a8a8c;margin-top:.6px">ARPEGGIATOR</div>
<div class="dd dd2" style="left:592.2px;top:581.6px;width:88px;height:16.4px"><span>Cutoff</span></div>
<div class="dd dd2" style="left:686.4px;top:581.6px;width:88px;height:16.4px"><span>Width</span></div>
<div class="dd dd2" style="left:780.6px;top:581.6px;width:88px;height:16.4px"><span>Tone</span></div>
<div class="dd dd2" style="left:874.9px;top:581.6px;width:88px;height:16.4px"><span>Time</span></div>


<svg class="a" style="left:488px;top:578px" width="90" height="22" viewBox="488 578 90 22">
 <g fill="#8c8c8e">
  <path d="M493.8,594.4 L505.8,594.4 Q507.8,594.2 507.4,592.2 L506,589.6 Q506.8,587.4 505.6,585.8 L506.4,584.2 L505.6,583.8 L504.6,585.4 L503.6,584.4 Q502.4,584.2 501,584.4 Q496.4,585 496,589.2 Q495.8,592 497.6,593.2 Q495.6,593.4 493.8,594.4 Z"/>
  <circle cx="506.6" cy="583.8" r="0.8"/>
 </g>
 <g fill="#9a9a9c">
  <circle cx="521.8" cy="583.6" r="1.5"/>
  <path d="M520.2,585.8 L523.6,585.8 L524.6,589.6 L526.2,590.6 L526,591.4 L523.8,590.6 L523.4,592.6 L524.8,596.6 L523.6,596.6 L522,593 L520.6,596.6 L519.2,596.6 L520.6,591.4 L520.2,589 L518.6,590.8 L518,590.2 Z"/>
  <rect x="525.6" y="587" width="0.9" height="9.6"/>
 </g>
 <g fill="#f07c3c">
  <path d="M536.2,595 L542.6,586.2 L545.2,589.6 L546.8,587.8 L551,595 Z"/>
  <path d="M544.6,584 L549.2,584.8 L547.2,586.6 L545.4,586.4 L545.4,589 L544.6,588.4 Z"/>
 </g>
 <path d="M539.6,595 L542.6,590" stroke="#222" stroke-width="0.9"/>
 <g fill="#8e8e90">
  <path d="M559.2,585.6 Q559.2,584.3 560.6,584.3 L571.2,584.3 Q572.5,584.3 572.5,585.6 L572.5,593.6 L559.2,593.6 Z"/>
 </g>
 <g fill="#262626">
  <rect x="560.6" y="587" width="2.2" height="2.4"/><rect x="563.6" y="587" width="2.2" height="2.4"/><rect x="566.6" y="587" width="2.2" height="2.4"/><rect x="569.4" y="587" width="1.8" height="2.4"/>
  <rect x="559.2" y="591.2" width="13.3" height="0.8"/>
 </g>
</svg>

<!-- speaker grille -->
<svg class="a" style="left:0;top:615px" width="1214" height="68" viewBox="0 615 1214 68">
 <defs><pattern id="gr" x="24.5" y="627.4" width="10.36" height="20.74" patternUnits="userSpaceOnUse">
  <circle cx="0" cy="0" r="2.05" fill="#3c3c3e"/><circle cx="10.36" cy="0" r="2.05" fill="#3c3c3e"/>
  <circle cx="0" cy="20.74" r="2.05" fill="#3c3c3e"/><circle cx="10.36" cy="20.74" r="2.05" fill="#3c3c3e"/>
  <circle cx="5.18" cy="10.37" r="2.05" fill="#3c3c3e"/>
 </pattern></defs>
 <rect x="16.6" y="623" width="1181.4" height="50" fill="url(#gr)"/>
</svg>

<svg class="a" style="left:1194px;top:663px" width="20" height="20" viewBox="1194 663 20 20">
 <g stroke-width="1">
  <line x1="1201.5" y1="683" x2="1214" y2="670.5" stroke="#e8e8e8"/>
  <line x1="1202.8" y1="683" x2="1214" y2="671.8" stroke="#7a7a7c"/>
  <line x1="1205.5" y1="683" x2="1214" y2="674.5" stroke="#e8e8e8"/>
  <line x1="1206.8" y1="683" x2="1214" y2="675.8" stroke="#7a7a7c"/>
  <line x1="1209.5" y1="683" x2="1214" y2="678.5" stroke="#e8e8e8"/>
  <line x1="1210.8" y1="683" x2="1214" y2="679.8" stroke="#7a7a7c"/>
 </g>
</svg>
<div class="a" style="left:0;top:681.6px;width:1214px;height:1.4px;background:#c6c6c8"></div>
</body></html>
